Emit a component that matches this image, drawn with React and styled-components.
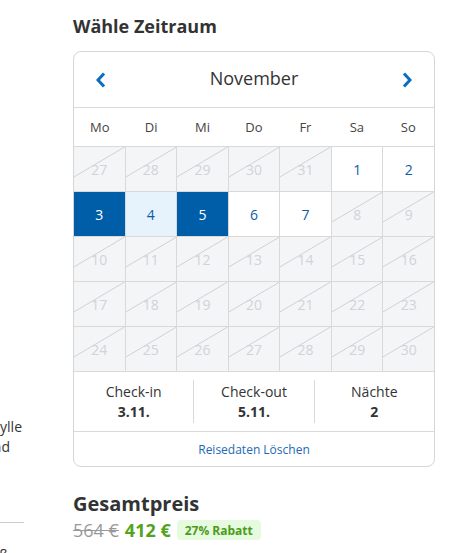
import React from 'react';
import styled, { createGlobalStyle } from 'styled-components';

const GlobalStyle = createGlobalStyle`
  body {
    margin: 0;
    background: #fff;
    font-family: "Open Sans", "Liberation Sans", sans-serif;
    color: #333;
  }
`;

const Page = styled.div`
  display: flex;
  align-items: flex-start;
  width: 455px;
  height: 553px;
  overflow: hidden;
`;

const SideColumn = styled.div`
  width: 24px;
  flex-shrink: 0;
  overflow: hidden;
  padding-top: 417px;
  font-size: 14px;
  line-height: 20px;
  color: #333;
`;

const SideLine = styled.div`
  display: flex;
  justify-content: flex-end;
  white-space: nowrap;
  padding-right: ${props => props.offset}px;
`;

const SideRule = styled.div`
  margin: 65px 0 22px;
  border-top: 1px solid #ccc;
`;

const MainColumn = styled.div`
  width: 362px;
  margin-left: 49px;
  padding-top: 14px;
`;

const Title = styled.h2`
  margin: 0 0 13px;
  font-size: 18px;
  line-height: 24px;
  font-weight: 700;
  color: #333;
`;

const Card = styled.div`
  border: 1px solid #d6d6d6;
  border-radius: 8px;
  overflow: hidden;
  background: #fff;
`;

const MonthBar = styled.div`
  display: flex;
  align-items: center;
  justify-content: space-between;
  height: 55px;
  padding: 0 22px;
  border-bottom: 1px solid #d9d9d9;
`;

const MonthName = styled.span`
  font-size: 18px;
  color: #333;
  margin-top: -3px;
`;

const NavButton = styled.button`
  display: flex;
  align-items: center;
  padding: 0;
  border: none;
  background: none;
  color: #0b6cc4;
  cursor: pointer;
`;

const WeekRow = styled.div`
  display: grid;
  grid-template-columns: repeat(7, 1fr);
  height: 38px;
  border-bottom: 1px solid #d9d9d9;
`;

const WeekDay = styled.div`
  display: flex;
  align-items: center;
  justify-content: center;
  font-size: 13px;
  color: #444;
`;

const DayGrid = styled.div`
  display: grid;
  grid-template-columns: repeat(7, 1fr);
  grid-auto-rows: 44px;
  gap: 1px;
  background: #d9d9d9;
  border-bottom: 1px solid #d9d9d9;
`;

const cellBg = {
  off: '#f4f5f7',
  free: '#fff',
  sel: '#005ea8',
  range: '#e7f3fc',
};

const cellColor = {
  off: '#d0d3d7',
  free: '#0a5da6',
  sel: '#fff',
  range: '#0a5da6',
};

const DayCell = styled.div`
  position: relative;
  display: flex;
  align-items: center;
  justify-content: center;
  font-size: 14px;
  background: ${props => cellBg[props.state]};
  color: ${props => cellColor[props.state]};

  svg {
    position: absolute;
    inset: 0;
    width: 100%;
    height: 100%;
  }

  span {
    position: relative;
  }
`;

const Summary = styled.div`
  display: flex;
  padding: 8px 0;
  border-bottom: 1px solid #d9d9d9;
`;

const SummaryItem = styled.div`
  flex: 1;
  padding: 2px 0;
  text-align: center;
  font-size: 14px;
  line-height: 19.5px;
  color: #333;

  & + & {
    border-left: 1px solid #d9d9d9;
  }

  strong {
    display: block;
    font-weight: 700;
  }
`;

const ClearLink = styled.div`
  display: flex;
  align-items: center;
  justify-content: center;
  height: 34px;
  font-size: 12px;
  color: #1c69b5;
  cursor: pointer;
`;

const PriceTitle = styled.h3`
  margin: 23px 0 1px;
  font-size: 20px;
  line-height: 27px;
  font-weight: 700;
  color: #333;
`;

const PriceRow = styled.div`
  display: flex;
  align-items: center;
  gap: 6px;
  height: 24px;
`;

const OldPrice = styled.span`
  font-size: 18px;
  color: #999;
  text-decoration: line-through;
`;

const NewPrice = styled.span`
  font-size: 18px;
  font-weight: 700;
  color: #52a41c;
`;

const Discount = styled.span`
  display: flex;
  align-items: center;
  height: 20px;
  padding: 0 8px;
  border-radius: 4px;
  background: #e6fae0;
  color: #4b9c19;
  font-size: 12px;
  font-weight: 700;
`;

const Chevron = ({ dir }) => (
  <svg width="10" height="16" viewBox="0 0 10 16">
    <polyline
      points={dir === 'left' ? '8,1.5 2,8 8,14.5' : '2,1.5 8,8 2,14.5'}
      fill="none"
      stroke="currentColor"
      strokeWidth="3"
      strokeLinejoin="miter"
    />
  </svg>
);

const Slash = () => (
  <svg viewBox="0 0 100 100" preserveAspectRatio="none">
    <line x1="0" y1="68" x2="100" y2="0" stroke="#cfd1d4" strokeWidth="1" vectorEffect="non-scaling-stroke" />
  </svg>
);

const weekDays = ['Mo', 'Di', 'Mi', 'Do', 'Fr', 'Sa', 'So'];

const days = [
  [27, 'off'], [28, 'off'], [29, 'off'], [30, 'off'], [31, 'off'], [1, 'free'], [2, 'free'],
  [3, 'sel'], [4, 'range'], [5, 'sel'], [6, 'free'], [7, 'free'], [8, 'off'], [9, 'off'],
  ...Array.from({ length: 21 }, (_, i) => [i + 10, 'off']),
];

const App = () => {
  return (
    <Page>
      <GlobalStyle />
      <SideColumn>
        <SideLine offset={2}>inmitten ländlicher Idylle</SideLine>
        <SideLine offset={14}>Ruhe und</SideLine>
        <SideRule />
        <SideLine offset={16}>Spaß</SideLine>
      </SideColumn>

      <MainColumn>
        <Title>Wähle Zeitraum</Title>
        <Card>
          <MonthBar>
            <NavButton aria-label="Vorheriger Monat"><Chevron dir="left" /></NavButton>
            <MonthName>November</MonthName>
            <NavButton aria-label="Nächster Monat"><Chevron dir="right" /></NavButton>
          </MonthBar>

          <WeekRow>
            {weekDays.map(d => <WeekDay key={d}>{d}</WeekDay>)}
          </WeekRow>

          <DayGrid>
            {days.map(([n, state], i) => (
              <DayCell key={i} state={state}>
                {state === 'off' && <Slash />}
                <span>{n}</span>
              </DayCell>
            ))}
          </DayGrid>

          <Summary>
            <SummaryItem>Check-in<strong>3.11.</strong></SummaryItem>
            <SummaryItem>Check-out<strong>5.11.</strong></SummaryItem>
            <SummaryItem>Nächte<strong>2</strong></SummaryItem>
          </Summary>

          <ClearLink>Reisedaten Löschen</ClearLink>
        </Card>

        <PriceTitle>Gesamtpreis</PriceTitle>
        <PriceRow>
          <OldPrice>564 €</OldPrice>
          <NewPrice>412 €</NewPrice>
          <Discount>27% Rabatt</Discount>
        </PriceRow>
      </MainColumn>
    </Page>
  );
};

export default App;
